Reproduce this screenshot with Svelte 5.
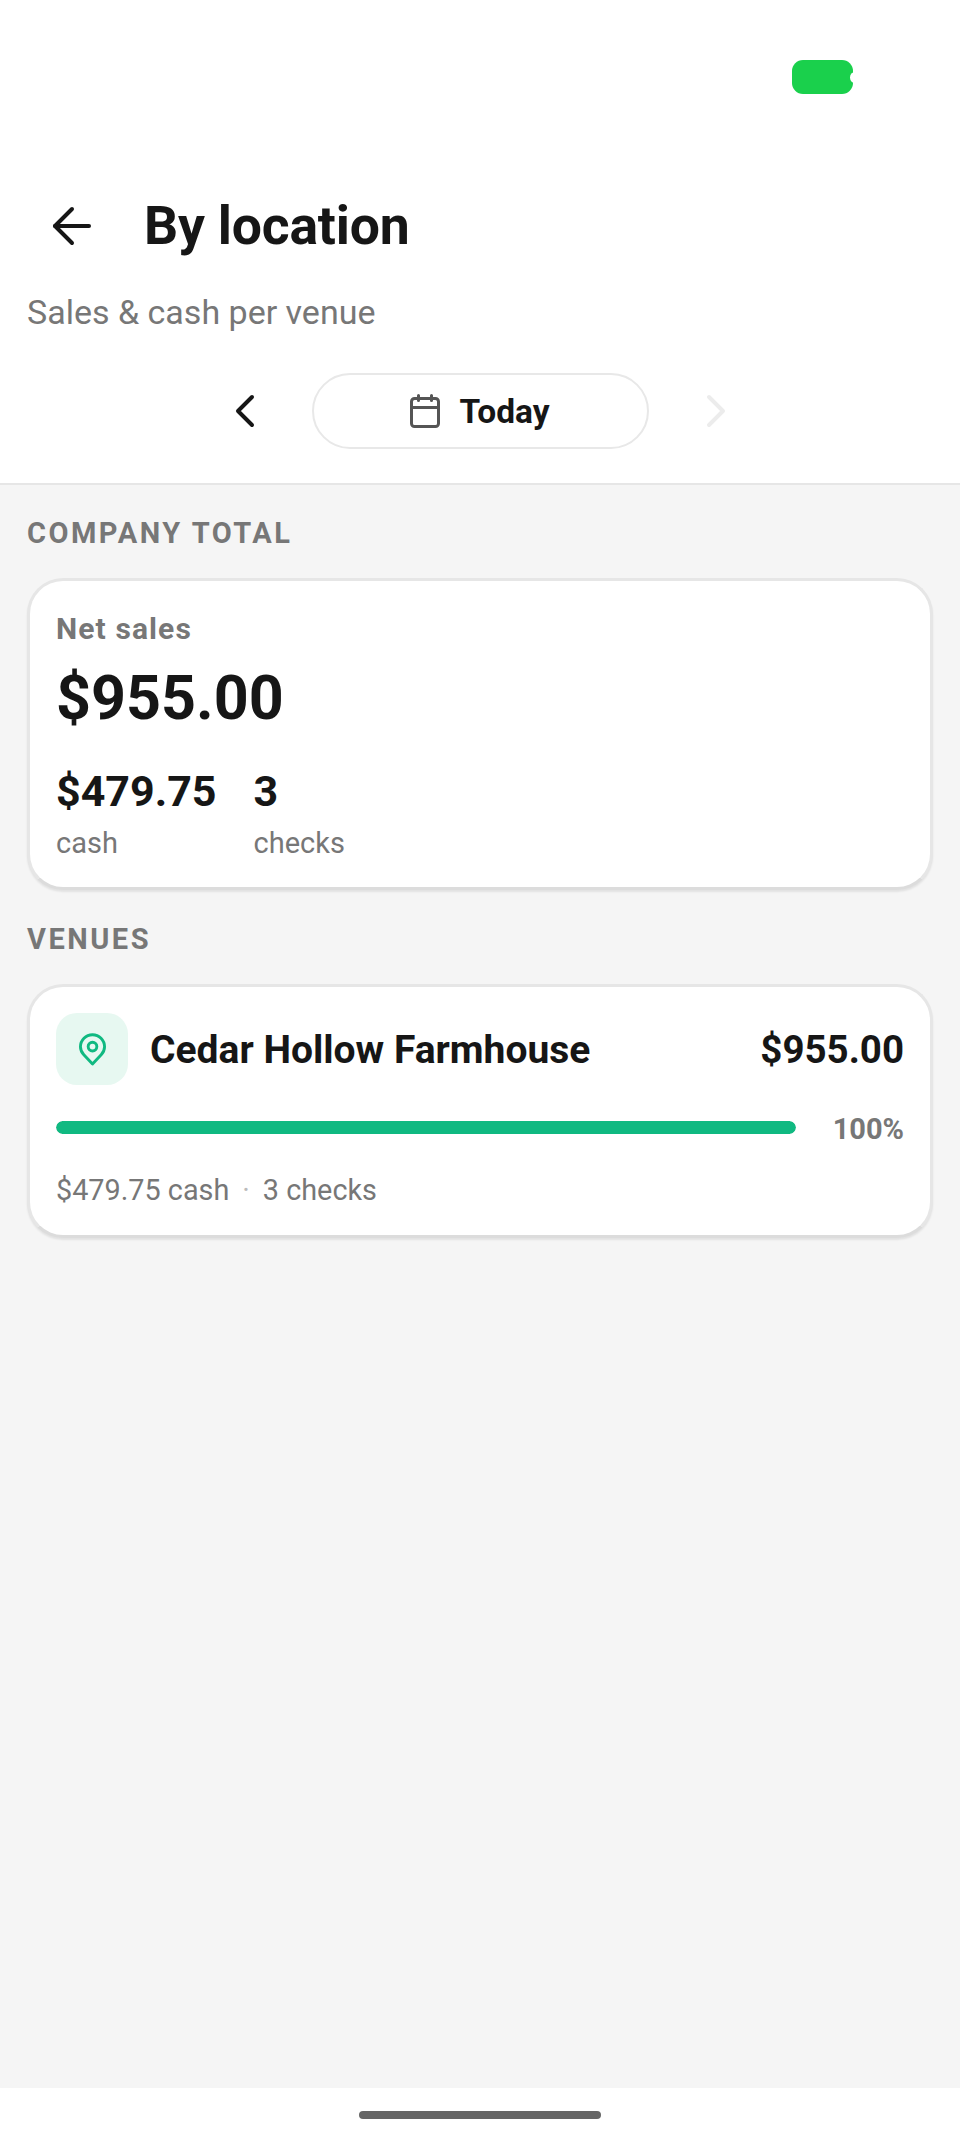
<script lang="ts">
	const stats = [
		{ value: '$479.75', label: 'cash' },
		{ value: '3', label: 'checks' }
	];
</script>

<div class="screen">
	<div class="status">
		<span class="pill"></span>
	</div>

	<header class="header">
		<div class="title-row">
			<button class="back" aria-label="Back">
				<svg viewBox="0 0 48 48" width="48" height="48" fill="none" stroke="#161616" stroke-width="4" stroke-linecap="round" stroke-linejoin="round">
					<path d="M41 24H7" />
					<path d="M24 7 7 24l17 17" />
				</svg>
			</button>
			<h1>By location</h1>
		</div>
		<p class="subtitle">Sales &amp; cash per venue</p>
		<div class="date-row">
			<svg viewBox="0 0 48 48" width="48" height="48" fill="none" stroke="#161616" stroke-width="4" stroke-linecap="round" stroke-linejoin="round">
				<path d="M31 10 17 24l14 14" />
			</svg>
			<div class="date">
				<svg viewBox="0 0 30 34" width="30" height="34" fill="none" stroke="#555" stroke-width="3" stroke-linecap="round" stroke-linejoin="round">
					<rect x="1.500" y="4.500" width="27" height="28" rx="3" />
					<path d="M1.500 13.500h27M8.500 1.500v5M21.500 1.500v5" />
				</svg>
				<span>Today</span>
			</div>
			<svg viewBox="0 0 48 48" width="48" height="48" fill="none" stroke="#ececec" stroke-width="4" stroke-linecap="round" stroke-linejoin="round">
				<path d="m17 10 14 14-14 14" />
			</svg>
		</div>
	</header>

	<main class="content">
		<h2 class="label">COMPANY TOTAL</h2>
		<section class="card total">
			<div class="net-label">Net sales</div>
			<div class="net-value">$955.00</div>
			<div class="stats">
				{#each stats as stat}
					<div class="stat">
						<div class="stat-value">{stat.value}</div>
						<div class="stat-label">{stat.label}</div>
					</div>
				{/each}
			</div>
		</section>

		<h2 class="label venues">VENUES</h2>
		<section class="card venue">
			<div class="venue-top">
				<div class="pin">
					<svg viewBox="0 0 28 34" width="27" height="33" fill="none" stroke="#10b981" stroke-width="3" stroke-linejoin="round">
						<path d="M14 32 5 22.500C2.800 20.200 1.500 17.400 1.500 14.200 1.500 7.300 7.100 1.700 14 1.700s12.500 5.600 12.500 12.500c0 3.200-1.300 6-3.500 8.300z" />
						<circle cx="14" cy="14" r="4.500" />
					</svg>
				</div>
				<div class="venue-name">Cedar Hollow Farmhouse</div>
				<div class="venue-amount">$955.00</div>
			</div>
			<div class="bar-row">
				<div class="track"><div class="fill" style="width: 100%"></div></div>
				<div class="percent">100%</div>
			</div>
			<div class="meta">
				<span>$479.75 cash</span>
				<span class="dot">·</span>
				<span>3 checks</span>
			</div>
		</section>
	</main>

	<div class="nav">
		<span class="handle"></span>
	</div>
</div>

<style>
	:global(body) {
		margin: 0;
		background: #fff;
	}

	.screen {
		display: flex;
		flex-direction: column;
		height: 2142px;
		font-family: Roboto, 'Liberation Sans', sans-serif;
		color: #161616;
		background: #f5f5f5;
	}

	.status {
		height: 188px;
		box-sizing: border-box;
		padding: 60px 107px 0 0;
		display: flex;
		justify-content: flex-end;
		background: #fff;
	}

	.pill {
		position: relative;
		width: 61px;
		height: 34px;
		border-radius: 11px;
		background: #1ad04c;
		overflow: hidden;
	}

	.pill::after {
		content: '';
		position: absolute;
		right: -7px;
		top: 12px;
		width: 10px;
		height: 11px;
		border-radius: 50%;
		background: #fff;
	}

	.header {
		background: #fff;
		border-bottom: 2px solid #e6e6e6;
		padding-bottom: 34px;
	}

	.title-row {
		display: flex;
		align-items: center;
		height: 75px;
		padding-left: 48px;
		gap: 48px;
	}

	.back {
		display: flex;
		padding: 0;
		border: 0;
		background: none;
	}

	h1 {
		margin: 0;
		font-size: 53.500px;
		line-height: 75px;
		font-weight: 700;
		letter-spacing: -0.200px;
	}

	.subtitle {
		margin: 29px 0 0;
		padding-left: 27px;
		font-size: 34px;
		line-height: 40px;
		color: #777;
	}

	.date-row {
		display: flex;
		align-items: center;
		justify-content: center;
		gap: 43px;
		margin-top: 41px;
	}

	.date {
		box-sizing: border-box;
		display: flex;
		align-items: center;
		justify-content: center;
		gap: 19px;
		width: 337px;
		height: 76px;
		border: 2.500px solid #e8e8e8;
		border-radius: 38px;
		font-size: 33.500px;
		font-weight: 700;
	}

	.content {
		flex: 1;
		padding: 32px 27px 0;
	}

	.label {
		margin: 0;
		font-size: 29px;
		line-height: 32px;
		font-weight: 700;
		letter-spacing: 2.500px;
		color: #777;
	}

	.label.venues {
		margin-top: 33px;
	}

	.card {
		box-sizing: border-box;
		margin-top: 29px;
		background: #fff;
		border: 3px solid #e6e6e6;
		border-bottom-color: #dcdcdc;
		border-radius: 36px;
		padding: 26px;
		box-shadow: 0 2px 2px rgba(0, 0, 0, 0.08);
	}

	.total {
		height: 312px;
		padding-top: 30px;
	}

	.net-label {
		font-size: 30px;
		line-height: 36px;
		font-weight: 700;
		letter-spacing: 1.100px;
		color: #777;
	}

	.net-value {
		margin-top: 13px;
		font-size: 61px;
		line-height: 76px;
		font-weight: 700;
	}

	.stats {
		display: flex;
		gap: 37px;
		margin-top: 29px;
	}

	.stat-value {
		font-size: 43px;
		line-height: 52px;
		font-weight: 700;
	}

	.stat-label {
		margin-top: 8px;
		font-size: 29px;
		line-height: 36px;
		color: #777;
	}

	.venue {
		height: 254px;
	}

	.venue-top {
		display: flex;
		align-items: center;
		gap: 22px;
	}

	.pin {
		flex: none;
		display: flex;
		align-items: center;
		justify-content: center;
		width: 72px;
		height: 72px;
		border-radius: 21px;
		background: #e7f8f1;
	}

	.venue-name {
		flex: 1;
		margin-top: 2px;
		font-size: 39px;
		line-height: 48px;
		font-weight: 700;
	}

	.venue-amount {
		margin-top: 2px;
		font-size: 38.500px;
		line-height: 48px;
		font-weight: 700;
	}

	.bar-row {
		display: flex;
		align-items: center;
		gap: 37px;
		margin-top: 23px;
	}

	.track {
		flex: 1;
		height: 13px;
		border-radius: 7px;
		background: #eee;
		overflow: hidden;
	}

	.fill {
		height: 100%;
		border-radius: 7px;
		background: #10b981;
	}

	.percent {
		margin-top: 3px;
		font-size: 29px;
		line-height: 36px;
		font-weight: 700;
		color: #777;
	}

	.meta {
		display: flex;
		align-items: center;
		gap: 13px;
		margin-top: 25px;
		font-size: 28.800px;
		line-height: 36px;
		color: #777;
	}

	.dot {
		color: #bbb;
	}

	.nav {
		height: 54px;
		display: flex;
		justify-content: center;
		padding-top: 23px;
		box-sizing: border-box;
		background: #fff;
	}

	.handle {
		width: 242px;
		height: 8px;
		border-radius: 4px;
		background: #666;
	}
</style>
